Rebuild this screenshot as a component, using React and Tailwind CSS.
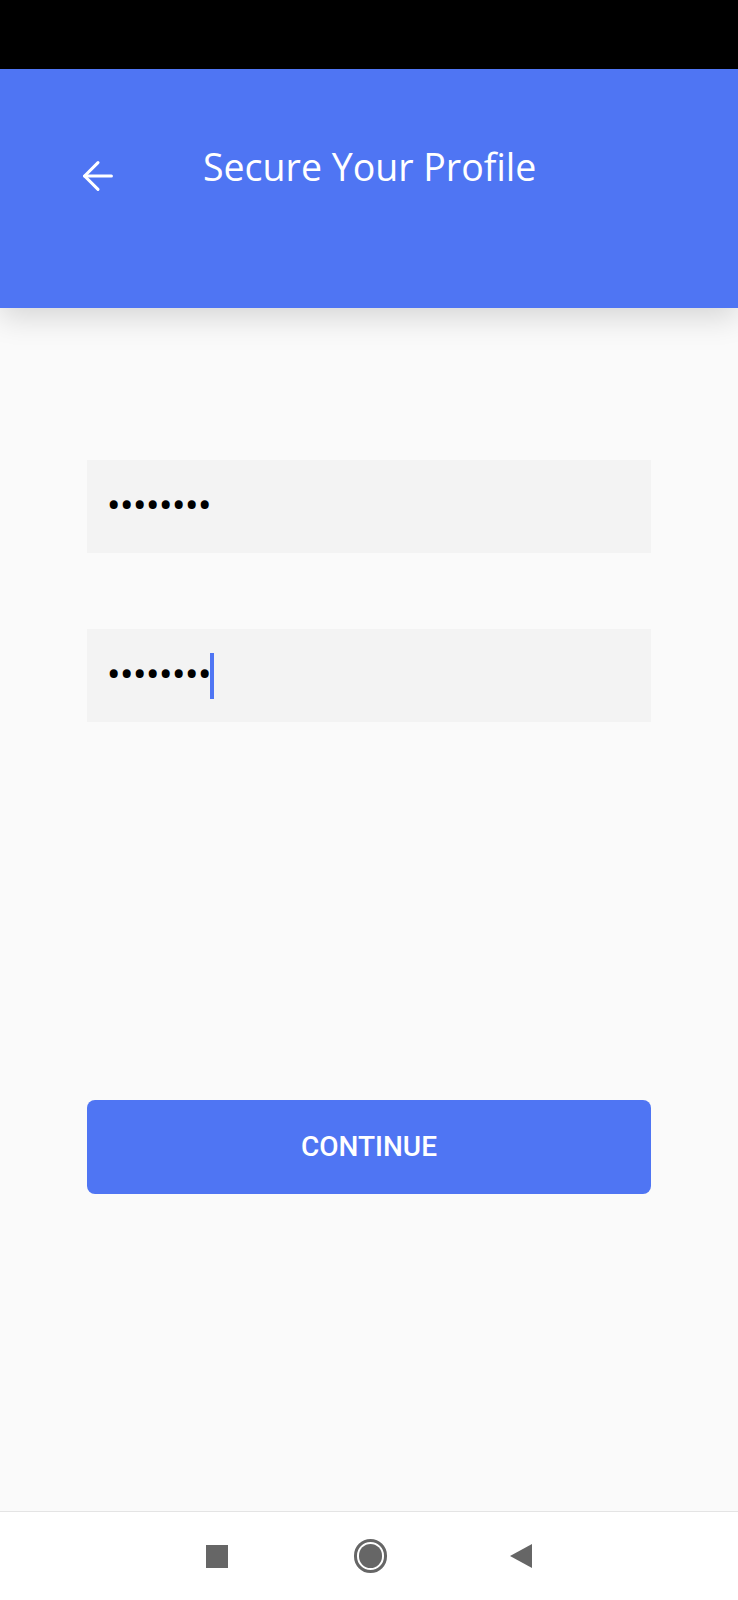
import { ArrowLeft } from 'lucide-react';

const PasswordField = ({ focused }) => (
    <div className="h-[93px] bg-[#f3f3f3] flex items-center pl-[20px]">
        <span className="text-[40px] leading-none text-black tracking-[-0.5px] font-['Roboto',sans-serif]">••••••••</span>
        {focused && <span className="-ml-[1px] w-[4px] h-[46px] bg-[#4f75f3]" />}
    </div>
);

const App = () => {
    return (
        <div className="w-[738px] h-[1600px] flex flex-col bg-[#fafafa] font-['Roboto',sans-serif]">
            <div className="h-[69px] bg-black shrink-0" />
            <header className="relative z-10 h-[239px] shrink-0 bg-[#4f75f3] shadow-[0_10px_28px_rgba(0,0,0,0.14)]">
                <div className="flex items-start">
                    <button className="ml-[75px] mt-[84px] text-white">
                        <ArrowLeft size={46} strokeWidth={1.6} />
                    </button>
                    <h1 className="ml-[82px] mt-[79px] text-white text-[37.5px] leading-none font-medium font-['Open_Sans',sans-serif]">
                        Secure Your Profile
                    </h1>
                </div>
            </header>

            <main className="flex-1 px-[87px] pt-[152px]">
                <div className="space-y-[76px]">
                    <PasswordField />
                    <PasswordField focused />
                </div>
                <button className="mt-[378px] w-full h-[94px] rounded-[8px] bg-[#4f75f3] text-white text-[28px] font-medium font-['Roboto',sans-serif]">
                    CONTINUE
                </button>
            </main>

            <nav className="h-[89px] shrink-0 bg-white border-t border-[#e4e4e4] flex items-center justify-center">
                <div className="flex items-center">
                    <div className="w-[22px] h-[23px] bg-[#666666]" />
                    <div className="ml-[126px] w-[33px] h-[34px] rounded-full border-[3px] border-[#666666] flex items-center justify-center">
                        <div className="w-[23px] h-[24px] rounded-full bg-[#666666]" />
                    </div>
                    <svg className="ml-[122px]" width="24" height="26" viewBox="0 0 24 26">
                        <path d="M23 1 L1 13 L23 25 Z" fill="#666666" />
                    </svg>
                </div>
            </nav>
        </div>
    );
};

export default App;
